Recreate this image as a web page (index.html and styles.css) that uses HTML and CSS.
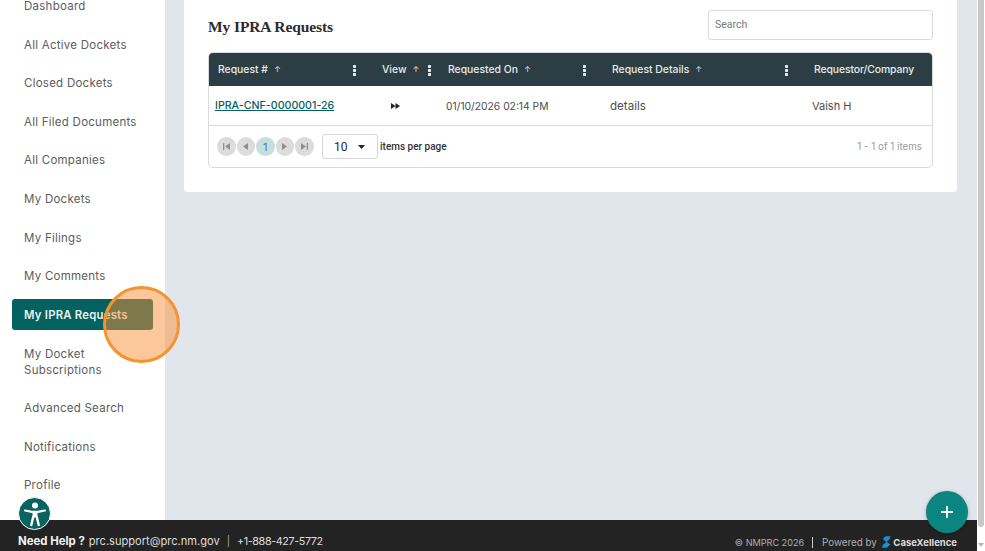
FILE: index.html
```html
<!DOCTYPE html>
<html lang="en">
<head>
<meta charset="utf-8">
<title>My IPRA Requests</title>
<link rel="stylesheet" href="styles.css">
</head>
<body>
<div class="app">
  <div class="content">
    <div class="page">
      <nav class="sidebar">
        <a class="nav-item nav-first">Dashboard</a>
        <a class="nav-item">All Active Dockets</a>
        <a class="nav-item">Closed Dockets</a>
        <a class="nav-item">All Filed Documents</a>
        <a class="nav-item">All Companies</a>
        <a class="nav-item">My Dockets</a>
        <a class="nav-item">My Filings</a>
        <a class="nav-item">My Comments</a>
        <a class="nav-item nav-active">My IPRA Requests</a>
        <a class="nav-item nav-double">My Docket<br>Subscriptions</a>
        <a class="nav-item">Advanced Search</a>
        <a class="nav-item">Notifications</a>
        <a class="nav-item">Profile</a>
      </nav>
      <main class="main">
        <section class="card">
          <div class="card-head">
            <h1 class="title">My IPRA Requests</h1>
            <div class="search">Search</div>
          </div>
          <div class="grid">
            <div class="grid-row grid-header">
              <div class="c c1"><span>Request #</span><i class="arrow">↑</i><b class="dots"></b></div>
              <div class="c c2"><span>View</span><i class="arrow">↑</i><b class="dots"></b></div>
              <div class="c c3"><span>Requested On</span><i class="arrow">↑</i><b class="dots"></b></div>
              <div class="c c4"><span>Request Details</span><i class="arrow">↑</i><b class="dots"></b></div>
              <div class="c c5"><span>Requestor/Company</span></div>
            </div>
            <div class="grid-row grid-body">
              <div class="c c1"><a class="link">IPRA-CNF-0000001-26</a></div>
              <div class="c c2">
                <svg width="9" height="6" viewBox="0 0 9 6"><path d="M0 0l4.500 3L0 6zM4.500 0L9 3 4.500 6z" fill="#222"/></svg>
              </div>
              <div class="c c3">01/10/2026 02:14 PM</div>
              <div class="c c4">details</div>
              <div class="c c5">Vaish H</div>
            </div>
            <div class="pager">
              <div class="pages">
                <span class="pg"><svg width="7" height="7" viewBox="0 0 7 7"><path d="M0 0h1.300v7H0zM7 0v7L2 3.500z" fill="#8f8f8f"/></svg></span>
                <span class="pg"><svg width="5" height="7" viewBox="0 0 5 7"><path d="M5 0v7L0 3.500z" fill="#8f8f8f"/></svg></span>
                <span class="pg pg-on">1</span>
                <span class="pg"><svg width="5" height="7" viewBox="0 0 5 7"><path d="M0 0v7l5-3.500z" fill="#8f8f8f"/></svg></span>
                <span class="pg"><svg width="7" height="7" viewBox="0 0 7 7"><path d="M7 0H5.700v7H7zM0 0v7l5-3.500z" fill="#8f8f8f"/></svg></span>
              </div>
              <div class="size"><span>10</span><svg width="7" height="4" viewBox="0 0 7 4"><path d="M0 0h7L3.500 4z" fill="#222"/></svg></div>
              <span class="per">items per page</span>
              <span class="count">1 - 1 of 1 items</span>
            </div>
          </div>
        </section>
      </main>
    </div>
    <footer class="footer">
      <div class="help"><b>Need Help ?</b><span class="mail">prc.support@prc.nm.gov</span><span class="sep">|</span><span class="phone">+1-888-427-5772</span></div>
      <div class="legal"><span class="copy">© NMPRC 2026</span><span class="bar"></span><span class="powered">Powered by</span>
        <svg width="9" height="12" viewBox="0 0 10 13"><path d="M9.500 0H4L.8 3.300 4.800 6.500 1 9.500 0 13h5.500l3.700-3.600L5.300 6.300 8.500 3.300z" fill="#1590d8"/></svg>
        <b>CaseXellence</b></div>
    </footer>
  </div>
  <div class="scrollbar">
    <span class="thumb"></span>
    <svg width="6" height="4" viewBox="0 0 6 4"><path d="M0 0h6L3 4z" fill="#b5b5b5"/></svg>
  </div>
  <div class="a11y">
    <svg width="30" height="30" viewBox="0 0 30 30"><circle cx="15" cy="6.500" r="3" fill="#fff"/><path d="M5 11.500l7 1.300h6l7-1.300" fill="none" stroke="#fff" stroke-width="2.200" stroke-linecap="round" stroke-linejoin="round"/><path d="M12.300 12.500h5.400l-.6 6h-4.200z" fill="#fff"/><path d="M13.300 17.500l-2 8.500M16.700 17.500l2 8.500" fill="none" stroke="#fff" stroke-width="2.400" stroke-linecap="round"/></svg>
  </div>
  <div class="fab"><svg width="12" height="12" viewBox="0 0 12 12"><path d="M6 .5v11M.5 6h11" stroke="#fff" stroke-width="1.800" stroke-linecap="round"/></svg></div>
  <div class="pulse"></div>
</div>
</body>
</html>
```
FILE: styles.css
```css
* { box-sizing: border-box; }
html, body { margin: 0; padding: 0; height: 100%; overflow: hidden; }
body { font-family: Inter, "Open Sans", sans-serif; color: #3a3a3a; background: #fff; }
.app { position: relative; width: 985px; height: 551px; display: flex; overflow: hidden; }
.content { width: 977px; flex: none; display: flex; flex-direction: column; }
.page { display: flex; height: 520px; }

.sidebar { width: 165px; background: #fff; padding: 0 12px; display: flex; flex-direction: column; flex: none; overflow: hidden; }
.nav-item { display: flex; align-items: center; height: 31px; margin-bottom: 7.600px; padding-left: 12px; font-size: 11.500px; letter-spacing: .25px; color: #5c5c5c; border-radius: 3px; white-space: nowrap; flex: none; }
.nav-first { margin-top: -9.400px; }
.nav-active { background: #03615f; color: #e8f3f2; font-weight: 600; width: 141px; font-size: 11.300px; }
.nav-double { height: 47px; line-height: 16px; display: block; padding-top: 8px; }

.main { flex: 1; background: #e1e6ed; padding: 0 20px 0 19px; }
.card { background: #fff; height: 200px; margin-top: -8px; padding: 18px 24px 0 24px; border-radius: 4px; }
.card-head { display: flex; justify-content: space-between; align-items: center; height: 30px; margin-bottom: 12px; }
.title { margin: 0; font-family: "Liberation Serif", serif; font-size: 15.500px; font-weight: 700; color: #2f2a2a; letter-spacing: -.1px; position: relative; top: 1.500px; }
.search { width: 225px; height: 30px; border: 1px solid #d8dbdf; border-radius: 3px; padding: 0 0 2px 6px; display: flex; align-items: center; font-family: Roboto, sans-serif; font-size: 10.500px; color: #777; }

.grid { border: 1px solid #d8dbdf; border-radius: 5px; overflow: hidden; width: 725px; }
.grid-row { display: flex; }
.c { display: flex; align-items: center; position: relative; flex: none; white-space: nowrap; font-size: 11.200px; }
.c1 { width: 163px; padding-left: 9px; }
.c2 { width: 67px; padding-left: 10px; }
.c3 { width: 163px; padding-left: 9px; }
.c4 { width: 202px; padding-left: 10px; }
.c5 { flex: 1; padding-left: 10px; }
.grid-header { height: 33px; background: #2c3e43; color: #e6ebec; padding-bottom: 1px; }
.grid-header .c { font-size: 10.400px; font-weight: 500; }
.grid-header .c5 { letter-spacing: -.1px; }
.arrow { font-style: normal; font-size: 8px; margin-left: 6px; color: #cfd6d8; }
.dots { position: absolute; top: 11.500px; width: 3px; height: 11px; background: radial-gradient(circle at 1.500px 1.500px, #e6ebec 1.400px, transparent 1.500px) 0 0 / 3px 4px repeat-y; }
.c1 .dots { right: 16px; }
.c2 .dots { right: 8px; }
.c3 .dots { right: 16px; }
.c4 .dots { right: 16px; }
.grid-body { height: 40px; border-bottom: 1px solid #d8dbdf; color: #4d4d4d; }
.grid-body .c1 { padding-left: 6px; font-size: 10.650px; }
.grid-body .c2 { padding-left: 19px; }
.grid-body .c3 { padding-left: 7px; font-size: 10.300px; }
.grid-body .c4 { padding-left: 8px; font-size: 11.600px; }
.grid-body .c5 { padding-left: 8px; font-size: 11px; }
.link { color: #03615f; text-decoration: underline; font-weight: 500; }

.pager { display: flex; align-items: center; height: 41px; padding: 0 10px 0 8px; }
.pages { display: flex; gap: 1px; }
.pg { width: 18.500px; height: 18.500px; border-radius: 50%; background: #dcdcdc; display: flex; align-items: center; justify-content: center; font-size: 11px; color: #777; }
.pg-on { background: #c5dfe1; color: #4f7f7f; }
.size { width: 56px; height: 25px; margin-left: 8.500px; border: 1px solid #d4d6d8; border-radius: 3px; display: flex; align-items: center; justify-content: space-between; padding: 0 12px 0 11px; font-family: Roboto, sans-serif; font-size: 12px; color: #2a2a2a; }
.per { margin-left: 2px; font-family: Roboto, sans-serif; font-size: 10px; font-weight: 500; color: #333; }
.count { margin-left: auto; font-size: 9.800px; color: #9a9a9a; }

.scrollbar { flex: none; width: 8px; background: #fff; display: flex; flex-direction: column; align-items: center; }
.scrollbar svg { margin-top: 16px; }
.thumb { width: 6px; height: 527px; background: #c8c8c8; border-radius: 0 0 3px 3px; }

.footer { height: 31px; background: #232323; display: flex; justify-content: space-between; align-items: flex-end; padding: 0 20px 3px 18px; color: #dedede; }
.help { display: flex; gap: 4px; font-size: 11.400px; align-items: baseline; }
.help b { color: #f4f4f4; font-weight: 700; }
.mail { font-size: 11.100px; }
.help .sep { margin: 0 3px; color: #aaa; font-size: 10px; }
.phone { font-size: 10.800px; letter-spacing: -.4px; }
.legal { display: flex; align-items: center; font-size: 9.100px; color: #b0b0b0; }
.bar { width: 1px; height: 11px; background: #ccc; margin: 0 9px 0 8px; }
.powered { font-size: 9.800px; margin-right: 5px; }
.legal b { color: #ddd; font-weight: 700; font-size: 9.500px; margin-left: 2.500px; }

.a11y { position: absolute; left: 18px; top: 497px; width: 33px; height: 33px; border-radius: 50%; background: #0a6360; border: 1px solid #fff; display: flex; align-items: center; justify-content: center; }
.fab { position: absolute; left: 926px; top: 491px; width: 42px; height: 42px; border-radius: 50%; background: #0b8580; display: flex; align-items: center; justify-content: center; box-shadow: 0 1px 4px rgba(0,0,0,.25); }
.pulse { position: absolute; left: 103px; top: 286px; width: 77px; height: 77px; border-radius: 50%; background: rgba(249,145,55,.5); border: 3px solid #f59331; }
```
